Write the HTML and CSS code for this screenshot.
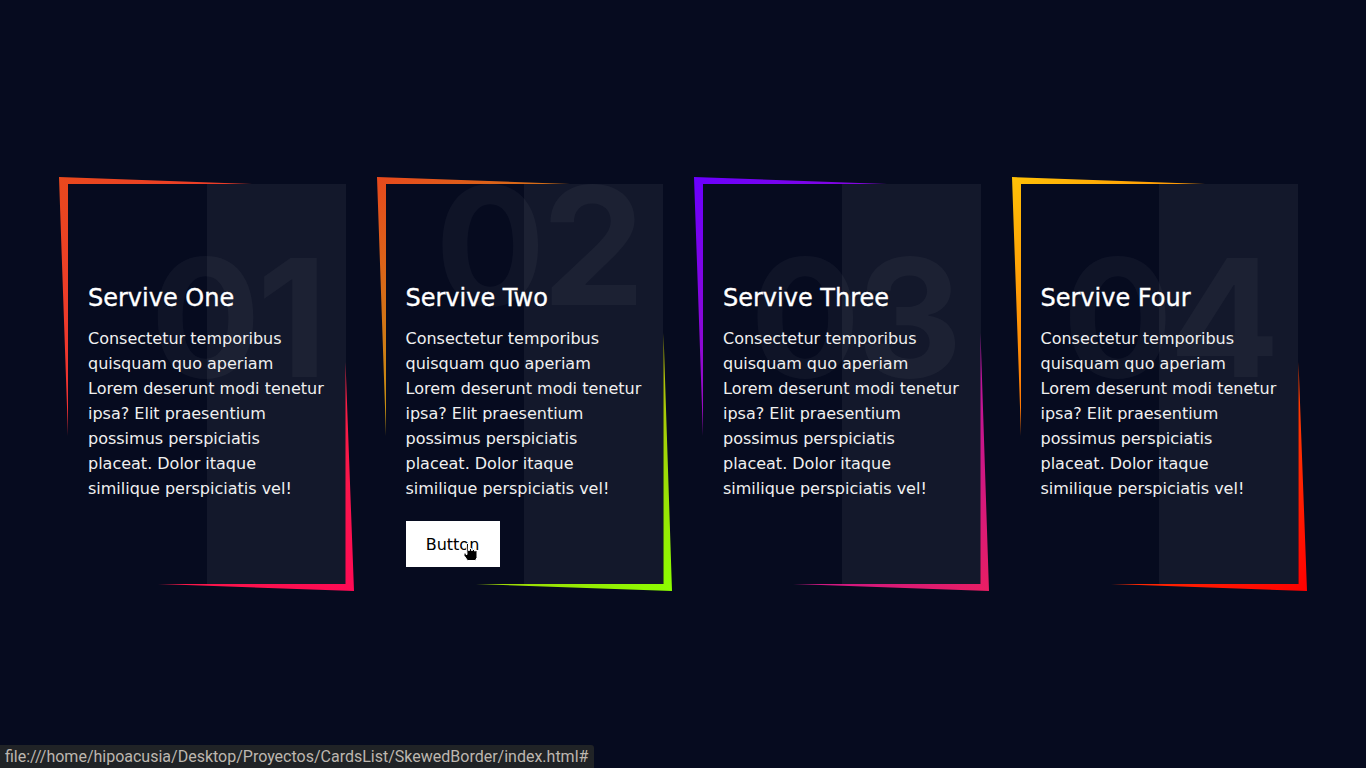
FILE: index.html
```html
<!DOCTYPE html>
<html lang="en">
<head>
<meta charset="utf-8">
<title>Skewed Border Cards</title>
<link rel="stylesheet" href="styles.css">
</head>
<body>
<main class="cards">
  <div class="card">
    <svg class="frame" viewBox="-10 -10 297.5 420" preserveAspectRatio="none" aria-hidden="true">
      <defs>
        <linearGradient id="g1" gradientUnits="userSpaceOnUse" x1="-9" y1="-7" x2="286" y2="407">
          <stop offset="0" stop-color="#e8491d"/>
          <stop offset="1" stop-color="#ff0a55"/>
        </linearGradient>
      </defs>
      <polygon points="-9,-7 184,0 0,0 0,252" fill="url(#g1)"/>
      <polygon points="286,407 90,400 277.5,400 277.5,178" fill="url(#g1)"/>
    </svg>
    <span class="num">01</span>
    <div class="content">
      <h2>Servive One</h2>
      <p>Consectetur temporibus quisquam quo aperiam Lorem deserunt modi tenetur ipsa? Elit praesentium possimus perspiciatis placeat. Dolor itaque similique perspiciatis vel!</p>
    </div>
  </div>

  <div class="card active">
    <svg class="frame" viewBox="-10 -10 297.5 420" preserveAspectRatio="none" aria-hidden="true">
      <defs>
        <linearGradient id="g2" gradientUnits="userSpaceOnUse" x1="-9" y1="-7" x2="286" y2="407">
          <stop offset="0" stop-color="#e8491d"/>
          <stop offset="1" stop-color="#8cff00"/>
        </linearGradient>
      </defs>
      <polygon points="-9,-7 184,0 0,0 0,252" fill="url(#g2)"/>
      <polygon points="286,407 90,400 277.5,400 277.5,149" fill="url(#g2)"/>
    </svg>
    <span class="num">02</span>
    <div class="content">
      <h2>Servive Two</h2>
      <p>Consectetur temporibus quisquam quo aperiam Lorem deserunt modi tenetur ipsa? Elit praesentium possimus perspiciatis placeat. Dolor itaque similique perspiciatis vel!</p>
      <a class="btn" href="#">Button</a>
    </div>
    <svg class="cursor" viewBox="0 0 18 20" aria-hidden="true">
      <path d="M5.5 1.5 h2 v7 h1 v-2 h2 v2 h1 v-1 h2 v1.5 h1 v-0.5 h1.5 v7 l-1.5 3 h-8 l-3.5 -5 v-2.5 h2 v1.5 h1 z" fill="#000" stroke="#fff" stroke-width="1"/>
    </svg>
  </div>

  <div class="card">
    <svg class="frame" viewBox="-10 -10 297.5 420" preserveAspectRatio="none" aria-hidden="true">
      <defs>
        <linearGradient id="g3" gradientUnits="userSpaceOnUse" x1="-9" y1="-7" x2="286" y2="407">
          <stop offset="0" stop-color="#6a00ff"/>
          <stop offset="1" stop-color="#e91e63"/>
        </linearGradient>
      </defs>
      <polygon points="-9,-7 184,0 0,0 0,252" fill="url(#g3)"/>
      <polygon points="286,407 90,400 277.5,400 277.5,149" fill="url(#g3)"/>
    </svg>
    <span class="num">03</span>
    <div class="content">
      <h2>Servive Three</h2>
      <p>Consectetur temporibus quisquam quo aperiam Lorem deserunt modi tenetur ipsa? Elit praesentium possimus perspiciatis placeat. Dolor itaque similique perspiciatis vel!</p>
    </div>
  </div>

  <div class="card">
    <svg class="frame" viewBox="-10 -10 297.5 420" preserveAspectRatio="none" aria-hidden="true">
      <defs>
        <linearGradient id="g4" gradientUnits="userSpaceOnUse" x1="-9" y1="-7" x2="286" y2="407">
          <stop offset="0" stop-color="#ffc107"/>
          <stop offset="1" stop-color="#ff0000"/>
        </linearGradient>
      </defs>
      <polygon points="-9,-7 184,0 0,0 0,252" fill="url(#g4)"/>
      <polygon points="286,407 90,400 277.5,400 277.5,178" fill="url(#g4)"/>
    </svg>
    <span class="num">04</span>
    <div class="content">
      <h2>Servive Four</h2>
      <p>Consectetur temporibus quisquam quo aperiam Lorem deserunt modi tenetur ipsa? Elit praesentium possimus perspiciatis placeat. Dolor itaque similique perspiciatis vel!</p>
    </div>
  </div>
</main>
<div class="status">file:///home/hipoacusia/Desktop/Proyectos/CardsList/SkewedBorder/index.html#</div>
</body>
</html>
```

FILE: styles.css
```css
* {
  box-sizing: border-box;
}

html, body {
  margin: 0;
  padding: 0;
}

body {
  min-height: 100vh;
  background: #060b1f;
  font-family: "DejaVu Sans", "Noto Sans", sans-serif;
  color: #fff;
  display: flex;
  align-items: center;
  justify-content: center;
}

.cards {
  display: flex;
  gap: 40px;
}

.card {
  position: relative;
  width: 277.5px;
  height: 400px;
}

.card::before {
  content: "";
  position: absolute;
  top: 0;
  right: 0;
  width: 50%;
  height: 100%;
  background: rgba(255, 255, 255, 0.055);
}

.frame {
  position: absolute;
  left: -10px;
  top: -10px;
  width: calc(100% + 20px);
  height: calc(100% + 20px);
  overflow: visible;
}

.num {
  position: absolute;
  right: 22px;
  top: 52px;
  font-family: "Inter", "Liberation Sans", sans-serif;
  font-weight: 700;
  font-size: 164px;
  line-height: 1;
  letter-spacing: -4px;
  color: rgba(255, 255, 255, 0.04);
}

.card.active .num {
  top: -20px;
}

.content {
  position: relative;
  padding: 100px 20px 20px;
}

.content h2 {
  margin: 0;
  font-size: 24px;
  line-height: 29px;
  font-weight: 400;
  color: #fff;
  -webkit-text-stroke: 0.35px #fff;
}

.content p {
  margin: 13px 0 0;
  font-size: 16px;
  line-height: 25px;
  color: #f0f0f0;
}

.btn {
  display: inline-flex;
  align-items: center;
  justify-content: center;
  margin-top: 20px;
  width: 94px;
  height: 46px;
  background: #fff;
  color: #000;
  text-decoration: none;
  font-size: 16px;
}

.cursor {
  position: absolute;
  left: 75px;
  top: 358px;
  width: 18px;
  height: 20px;
}

.status {
  position: fixed;
  left: 0;
  bottom: 0;
  height: 23px;
  padding: 0 6px 0 5px;
  background: #202326;
  border-top-right-radius: 3px;
  font-family: "Roboto", "Liberation Sans", sans-serif;
  font-size: 16px;
  line-height: 23px;
  color: #bdb7b0;
}
```
